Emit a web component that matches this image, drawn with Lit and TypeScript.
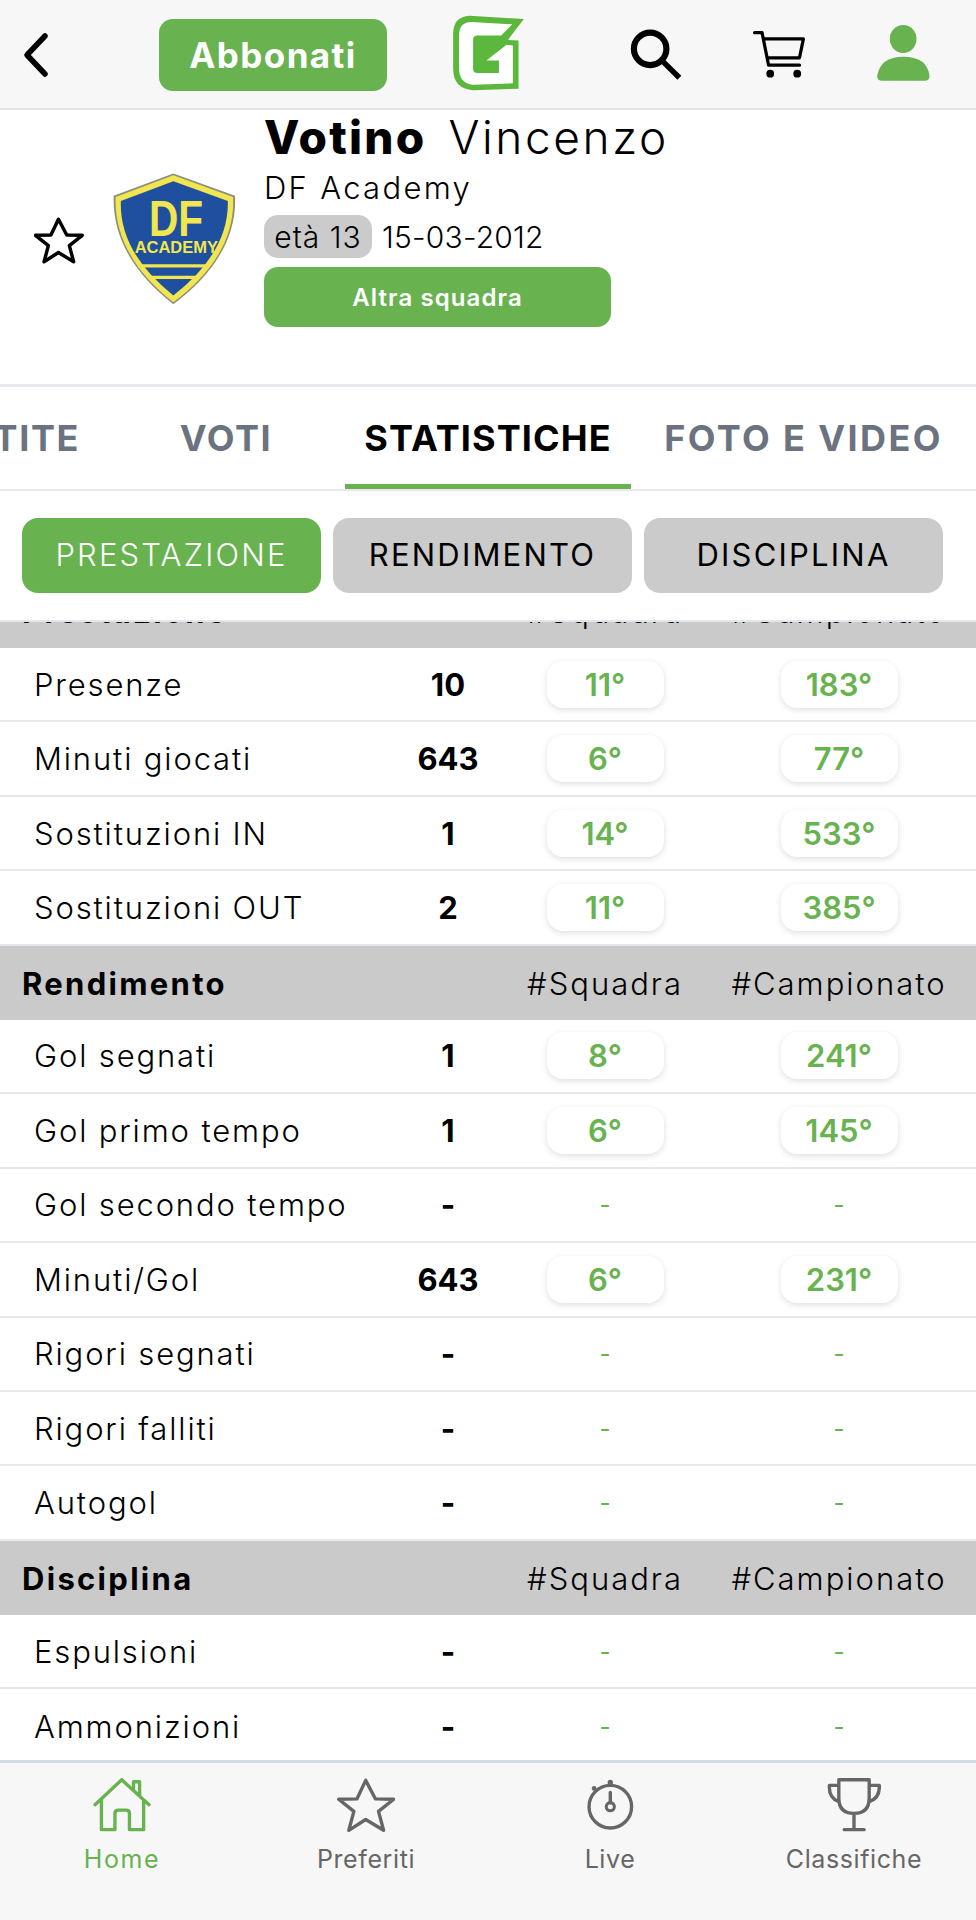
import { LitElement, html, css, svg } from "lit";
import { customElement } from "lit/decorators.js";

type Row = [string, string, string, string];
interface Section { title: string; rows: Row[]; }

const SECTIONS: Section[] = [
  { title: "Prestazione", rows: [
    ["Presenze", "10", "11°", "183°"],
    ["Minuti giocati", "643", "6°", "77°"],
    ["Sostituzioni IN", "1", "14°", "533°"],
    ["Sostituzioni OUT", "2", "11°", "385°"],
  ]},
  { title: "Rendimento", rows: [
    ["Gol segnati", "1", "8°", "241°"],
    ["Gol primo tempo", "1", "6°", "145°"],
    ["Gol secondo tempo", "-", "-", "-"],
    ["Minuti/Gol", "643", "6°", "231°"],
    ["Rigori segnati", "-", "-", "-"],
    ["Rigori falliti", "-", "-", "-"],
    ["Autogol", "-", "-", "-"],
  ]},
  { title: "Disciplina", rows: [
    ["Espulsioni", "-", "-", "-"],
    ["Ammonizioni", "-", "-", "-"],
  ]},
];

const icons = {
  back: svg`<path d="M46 8 L10 46 L46 84" fill="none" stroke="#000" stroke-width="11" stroke-linecap="round" stroke-linejoin="round"/>`,
  search: svg`<circle cx="88" cy="100" r="50" fill="none" stroke="#000" stroke-width="19"/><path d="M126 138 L178 189" stroke="#000" stroke-width="17" fill="none"/>`,
  cart: svg`<path d="M402 51 H425 L445 151 H540 M429 70 H552 L540 128 H440" fill="none" stroke="#000" stroke-width="10" stroke-linecap="round" stroke-linejoin="round"/><circle cx="450" cy="177" r="12"/><circle cx="533" cy="177" r="12"/>`,
  user: svg`<ellipse cx="853" cy="75" rx="40" ry="42" fill="#68b250"/><path d="M775 185 Q785 128 853 128 Q925 128 932 185 Q932 200 918 200 H790 Q775 200 775 185Z" fill="#68b250"/>`,
  logo: svg`<path d="M75 20 L238 30 L190 93 L222 95 V240 L85 245 Q25 240 25 180 V75 Q25 22 75 20Z" fill="#5cb83c"/><path d="M80 39 L203 46 L170 80 H98 Q85 80 85 93 V180 Q85 193 98 193 H163 V155 H125 L186 108 L205 110 V224 L85 228 Q43 224 43 180 V75 Q45 39 80 39Z" fill="#fff"/>`,
  star: svg`<path d="M855 32 L884 87 L938 88 L893 124 L908 180 L855 148 L805 180 L820 124 L775 88 L829 87 Z" fill="none" stroke-width="10" stroke-linejoin="round"/>`,
  home: svg`<path d="M46 104 L125 30 L206 104 M160 62 V36 H178 V78 M65 90 V178 H105 V130 Q105 120 115 120 H138 Q148 120 148 130 V178 H190 V90" fill="none" stroke-width="10" stroke-linecap="round" stroke-linejoin="round"/>`,
  watch: svg`<circle cx="125" cy="110" r="63" fill="none" stroke-width="10"/><circle cx="125" cy="38" r="8" stroke="none" fill="#666"/><circle cx="77" cy="56" r="7" stroke="none" fill="#666"/><path d="M125 68 V98" fill="none" stroke-width="10" stroke-linecap="round"/><circle cx="125" cy="110" r="12" fill="none" stroke-width="9"/>`,
  cup: svg`<path d="M810 30 H900 V85 Q900 130 855 130 Q810 130 810 85 Z M810 47 H782 Q780 85 810 95 M900 47 H930 Q932 85 900 95 M855 130 V178 M826 178 H885" fill="none" stroke-width="10" stroke-linecap="round" stroke-linejoin="round"/>`,
};

@customElement("app-root")
export class AppRoot extends LitElement {
  static styles = css`
    :host {
      display: flex;
      flex-direction: column;
      width: 976px;
      height: 1920px;
      overflow: hidden;
      background: #fff;
      color: #000;
      font-family: "Inter", "Noto Sans", sans-serif;
    }
    svg { display: block; flex: none; }

    .top {
      flex: none;
      box-sizing: border-box;
      height: 110px;
      background: #f7f7f7;
      border-bottom: 2px solid #e4e4e4;
      display: flex;
      align-items: center;
      padding-left: 22px;
    }
    .back { width: 30px; height: 46px; margin-right: 107px; margin-top: 1px; }
    .subscribe {
      width: 228px;
      height: 72px;
      border-radius: 14px;
      background: #68b250;
      color: #fff;
      font-size: 35px;
      font-weight: 700;
      letter-spacing: 1.4px;
      display: flex;
      align-items: center;
      justify-content: center;
      margin-right: 64px;
      margin-top: 2px;
    }
    .logo { width: 75px; height: 78px; margin-right: 104px; margin-bottom: 2px; }
    .search { width: 52px; height: 52px; margin-right: 70px; margin-bottom: 1px; }
    .cart { width: 54px; height: 49px; margin-right: 71px; }
    .user { width: 53px; height: 56px; margin-bottom: 2px; }

    .profile {
      flex: none;
      box-sizing: border-box;
      height: 277px;
      border-bottom: 3px solid #e8e8ec;
      display: flex;
      align-items: flex-start;
      padding-left: 34px;
    }
    .fav { width: 50px; height: 47px; margin-top: 107px; margin-right: 29px; stroke: #000; }
    .fav path { stroke-width: 12; }
    .crest { width: 124px; height: 134px; margin-top: 62px; margin-right: 27px; }
    .info { display: flex; flex-direction: column; align-items: flex-start; }
    .name { font-size: 46px; line-height: 54px; display: flex; gap: 22px; white-space: nowrap; letter-spacing: 2.6px; }
    .name b { font-weight: 800; letter-spacing: 2.2px; }
    .name span { font-weight: 300; }
    .club { font-size: 31px; line-height: 48px; font-weight: 300; letter-spacing: 2.3px; }
    .meta { display: flex; align-items: center; gap: 10px; margin-top: 3px; font-size: 30px; font-weight: 300; letter-spacing: 0.2px; }
    .age { background: #cbcbcb; border-radius: 14px; height: 43px; width: 108px; display: flex; align-items: center; justify-content: center; letter-spacing: 1px; }
    .other {
      margin-top: 9px;
      width: 347px;
      height: 60px;
      border-radius: 14px;
      background: #68b250;
      color: #fff;
      font-size: 24px;
      font-weight: 600;
      letter-spacing: 1.1px;
      display: flex;
      align-items: center;
      justify-content: center;
    }

    .tabs {
      flex: none;
      box-sizing: border-box;
      height: 104px;
      border-bottom: 2px solid #e8e8ec;
      display: grid;
      grid-template-columns: 107px 238px 286px 345px;
      overflow: hidden;
      font-size: 36px;
      font-weight: 700;
      letter-spacing: 1.6px;
      color: #6b7280;
    }
    .tab { display: flex; align-items: center; justify-content: center; height: 102px; box-sizing: border-box; white-space: nowrap; }
    .tab.clip { justify-content: flex-end; padding-right: 27px; }
    .tab.on { color: #000; border-bottom: 5px solid #68b250; padding-top: 5px; letter-spacing: 1.1px; }
    .tab.wide { letter-spacing: 2.4px; }

    .subtabs {
      flex: none;
      box-sizing: border-box;
      height: 131px;
      padding: 27px 33px 27px 22px;
      border-bottom: 2px solid #e3e6ec;
      display: grid;
      grid-template-columns: repeat(3, 1fr);
      gap: 12px;
    }
    .sub {
      border-radius: 16px;
      background: #cbcbcb;
      font-size: 31px;
      font-weight: 400;
      letter-spacing: 2.2px;
      padding-bottom: 2px;
      display: flex;
      align-items: center;
      justify-content: center;
    }
    .sub.on { background: #68b250; color: #fff; font-weight: 300; }

    .table { flex: 1; min-height: 0; overflow: hidden; }
    .table .inner { margin-top: -48px; }
    .grid { display: grid; grid-template-columns: 398px 100px 214px 254px; align-items: center; }
    .head { box-sizing: border-box; height: 74px; padding-top: 1px; background: #cacaca; font-size: 31px; }
    .head b { font-weight: 700; padding-left: 22px; letter-spacing: 2.3px; }
    .head span { text-align: center; letter-spacing: 2px; font-weight: 300; }
    .row { box-sizing: border-box; height: 74.45px; border-bottom: 2px solid #e8e8ec; font-size: 31px; }
    .row:last-child { border-bottom: 0; }
    .lbl { padding-left: 34px; font-weight: 300; letter-spacing: 1.85px; white-space: nowrap; }
    .val { text-align: center; font-weight: 700; }
    .cell { display: flex; justify-content: center; color: #68b250; }
    .pill {
      width: 117px;
      height: 47px;
      border-radius: 16px;
      background: #fff;
      box-shadow: 0 2px 6px rgba(0, 0, 0, 0.13);
      font-weight: 600;
      display: flex;
      align-items: center;
      justify-content: center;
    }
    .dash { font-size: 24px; font-weight: 400; }

    .foot {
      flex: none;
      box-sizing: border-box;
      height: 160px;
      background: #f7f7f7;
      border-top: 3px solid #d2dae5;
      display: grid;
      grid-template-columns: repeat(4, 244px);
      padding-top: 15px;
    }
    .nav { display: flex; flex-direction: column; align-items: center; color: #666; stroke: #666; font-size: 25px; font-weight: 400; letter-spacing: 0.6px; }
    .nav.on { color: #68b250; stroke: #68b250; letter-spacing: 1.6px; }
    .nav svg { height: 54px; margin-bottom: 12px; }
    .nav span { line-height: 30px; }
  `;

  private icon(cls: string, vb: string, body: unknown) {
    return html`<svg class=${cls} viewBox=${vb}>${body}</svg>`;
  }

  private crest() {
    return html`<svg class="crest" viewBox="66 66 378 404">
      <path d="M250 68 L438 136 Q446 320 250 467 Q62 320 68 136 Z" fill="#8d8f7a"/>
      <path d="M250 74 L432 140 Q440 318 250 461 Q68 318 74 140 Z" fill="#f2e650"/>
      <path d="M250 92 L416 152 Q420 308 250 440 Q84 308 90 152 Z" fill="#1f4f9f"/>
      <path d="M142 350 H358 M176 385 H326" stroke="#f2e650" stroke-width="10"/>
      <text x="258" y="258" text-anchor="middle" font-family="Liberation Sans" font-weight="700" font-size="150" fill="#f2e650" textLength="165" lengthAdjust="spacingAndGlyphs">DF</text>
      <text x="259" y="312" text-anchor="middle" font-family="Liberation Sans" font-weight="700" font-size="52" fill="#f2e650" textLength="254" lengthAdjust="spacingAndGlyphs">ACADEMY</text>
    </svg>`;
  }

  private value(v: string) {
    if (v === "-") return html`<div class="cell"><span class="dash">-</span></div>`;
    return html`<div class="cell"><div class="pill">${v}</div></div>`;
  }

  render() {
    return html`
      <div class="top">
        ${this.icon("back", "0 0 60 92", icons.back)}
        <div class="subscribe">Abbonati</div>
        ${this.icon("logo", "20 15 223 235", icons.logo)}
        ${this.icon("search", "26 36 160 160", icons.search)}
        ${this.icon("cart", "394 44 166 148", icons.cart)}
        ${this.icon("user", "775 33 158 168", icons.user)}
      </div>

      <div class="profile">
        ${this.icon("fav", "770 26 174 160", icons.star)}
        ${this.crest()}
        <div class="info">
          <div class="name"><b>Votino</b><span>Vincenzo</span></div>
          <div class="club">DF Academy</div>
          <div class="meta"><div class="age">età 13</div><div>15-03-2012</div></div>
          <div class="other">Altra squadra</div>
        </div>
      </div>

      <div class="tabs">
        <div class="tab clip">PARTITE</div>
        <div class="tab">VOTI</div>
        <div class="tab on">STATISTICHE</div>
        <div class="tab wide">FOTO E VIDEO</div>
      </div>

      <div class="subtabs">
        <div class="sub on">PRESTAZIONE</div>
        <div class="sub">RENDIMENTO</div>
        <div class="sub">DISCIPLINA</div>
      </div>

      <div class="table"><div class="inner">
        ${SECTIONS.map((s) => html`
          <div class="grid head">
            <b>${s.title}</b><i></i><span>#Squadra</span><span>#Campionato</span>
          </div>
          ${s.rows.map((r) => html`
            <div class="grid row">
              <div class="lbl">${r[0]}</div>
              <div class="val">${r[1]}</div>
              ${this.value(r[2])}
              ${this.value(r[3])}
            </div>
          `)}
        `)}
      </div></div>

      <div class="foot">
        <div class="nav on">${this.icon("", "40 25 170 160", icons.home)}<span>Home</span></div>
        <div class="nav">${this.icon("", "770 25 172 160", icons.star)}<span>Preferiti</span></div>
        <div class="nav">${this.icon("", "50 25 150 160", icons.watch)}<span>Live</span></div>
        <div class="nav">${this.icon("", "775 25 162 160", icons.cup)}<span>Classifiche</span></div>
      </div>
    `;
  }
}
